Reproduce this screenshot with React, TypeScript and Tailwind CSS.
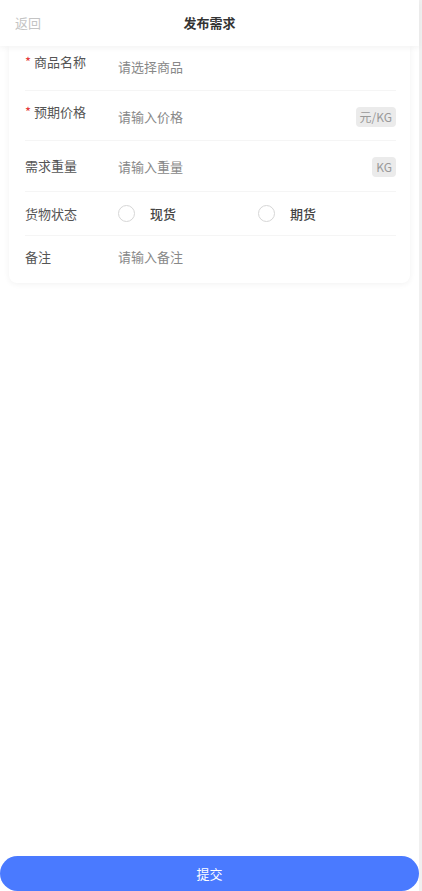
import { useState } from "react";

const font = { fontFamily: '"Noto Sans CJK SC", "Noto Sans", sans-serif' };

function Radio({ checked, label, onClick }: { checked: boolean; label: string; onClick: () => void }) {
  return (
    <button type="button" onClick={onClick} className="flex items-center">
      <span
        className={
          checked
            ? "w-[17px] h-[17px] rounded-full border-[5px] border-[#4a7aff]"
            : "w-[17px] h-[17px] rounded-full border border-[#d6d6d6] bg-white"
        }
      />
      <span className="ml-[15px] text-[13px] leading-[18px] font-medium text-[#444]">{label}</span>
    </button>
  );
}

export default function App() {
  const [status, setStatus] = useState("");

  return (
    <div className="w-[422px] h-[891px] flex bg-white overflow-hidden" style={font}>
      <div className="w-[419px] h-full flex flex-col">
        {/* Header */}
        <div className="h-[46px] shrink-0 grid grid-cols-[1fr_auto_1fr] items-center px-[15px] bg-white shadow-[0_2px_6px_rgba(0,0,0,0.05)] relative z-10">
          <span className="text-[13px] text-[#c4c4c4]">返回</span>
          <span className="text-[13px] font-bold text-[#333]">发布需求</span>
          <span />
        </div>

        {/* Form card */}
        <div className="mx-[9px] w-[401px] bg-white rounded-b-[8px] shadow-[0_1px_6px_rgba(0,0,0,0.06)] pl-[16px] pr-[14px] text-[13px] leading-[18px]">
          <div className="h-[45px] flex border-b border-[#f5f5f5]">
            <div className="w-[93px] pt-[7px] text-[#555]">
              <span className="text-[#e4393c] mr-[3px]">*</span>商品名称
            </div>
            <div className="pt-[12px] text-[#888]">请选择商品</div>
          </div>

          <div className="h-[50px] flex border-b border-[#f5f5f5]">
            <div className="w-[93px] pt-[12px] text-[#555]">
              <span className="text-[#e4393c] mr-[3px]">*</span>预期价格
            </div>
            <div className="flex-1 pt-[17px] text-[#888]">请输入价格</div>
            <div className="pt-[16px]">
              <span className="block h-[20px] px-[4px] rounded-[4px] bg-[#ebebeb] text-[12px] leading-[20px] text-[#999]">元/KG</span>
            </div>
          </div>

          <div className="h-[51px] flex border-b border-[#f5f5f5]">
            <div className="w-[93px] pt-[16px] text-[#555]">需求重量</div>
            <div className="flex-1 pt-[17px] text-[#888]">请输入重量</div>
            <div className="pt-[16px]">
              <span className="block h-[20px] px-[4px] rounded-[4px] bg-[#ebebeb] text-[12px] leading-[20px] text-[#999]">KG</span>
            </div>
          </div>

          <div className="h-[44px] flex items-center border-b border-[#f5f5f5]">
            <div className="w-[93px] text-[#555]">货物状态</div>
            <div className="w-[140px]">
              <Radio checked={status === "spot"} label="现货" onClick={() => setStatus("spot")} />
            </div>
            <Radio checked={status === "future"} label="期货" onClick={() => setStatus("future")} />
          </div>

          <div className="h-[47px] flex">
            <div className="w-[93px] pt-[12px] text-[#555]">备注</div>
            <div className="pt-[12px] text-[#888]">请输入备注</div>
          </div>
        </div>

        <div className="flex-1" />

        <button
          type="button"
          className="h-[35px] w-full shrink-0 rounded-full bg-[#4a7aff] text-white text-[13px]"
        >
          提交
        </button>
      </div>
      <div className="w-[3px] h-full bg-[#f0f0f0]" />
    </div>
  );
}
